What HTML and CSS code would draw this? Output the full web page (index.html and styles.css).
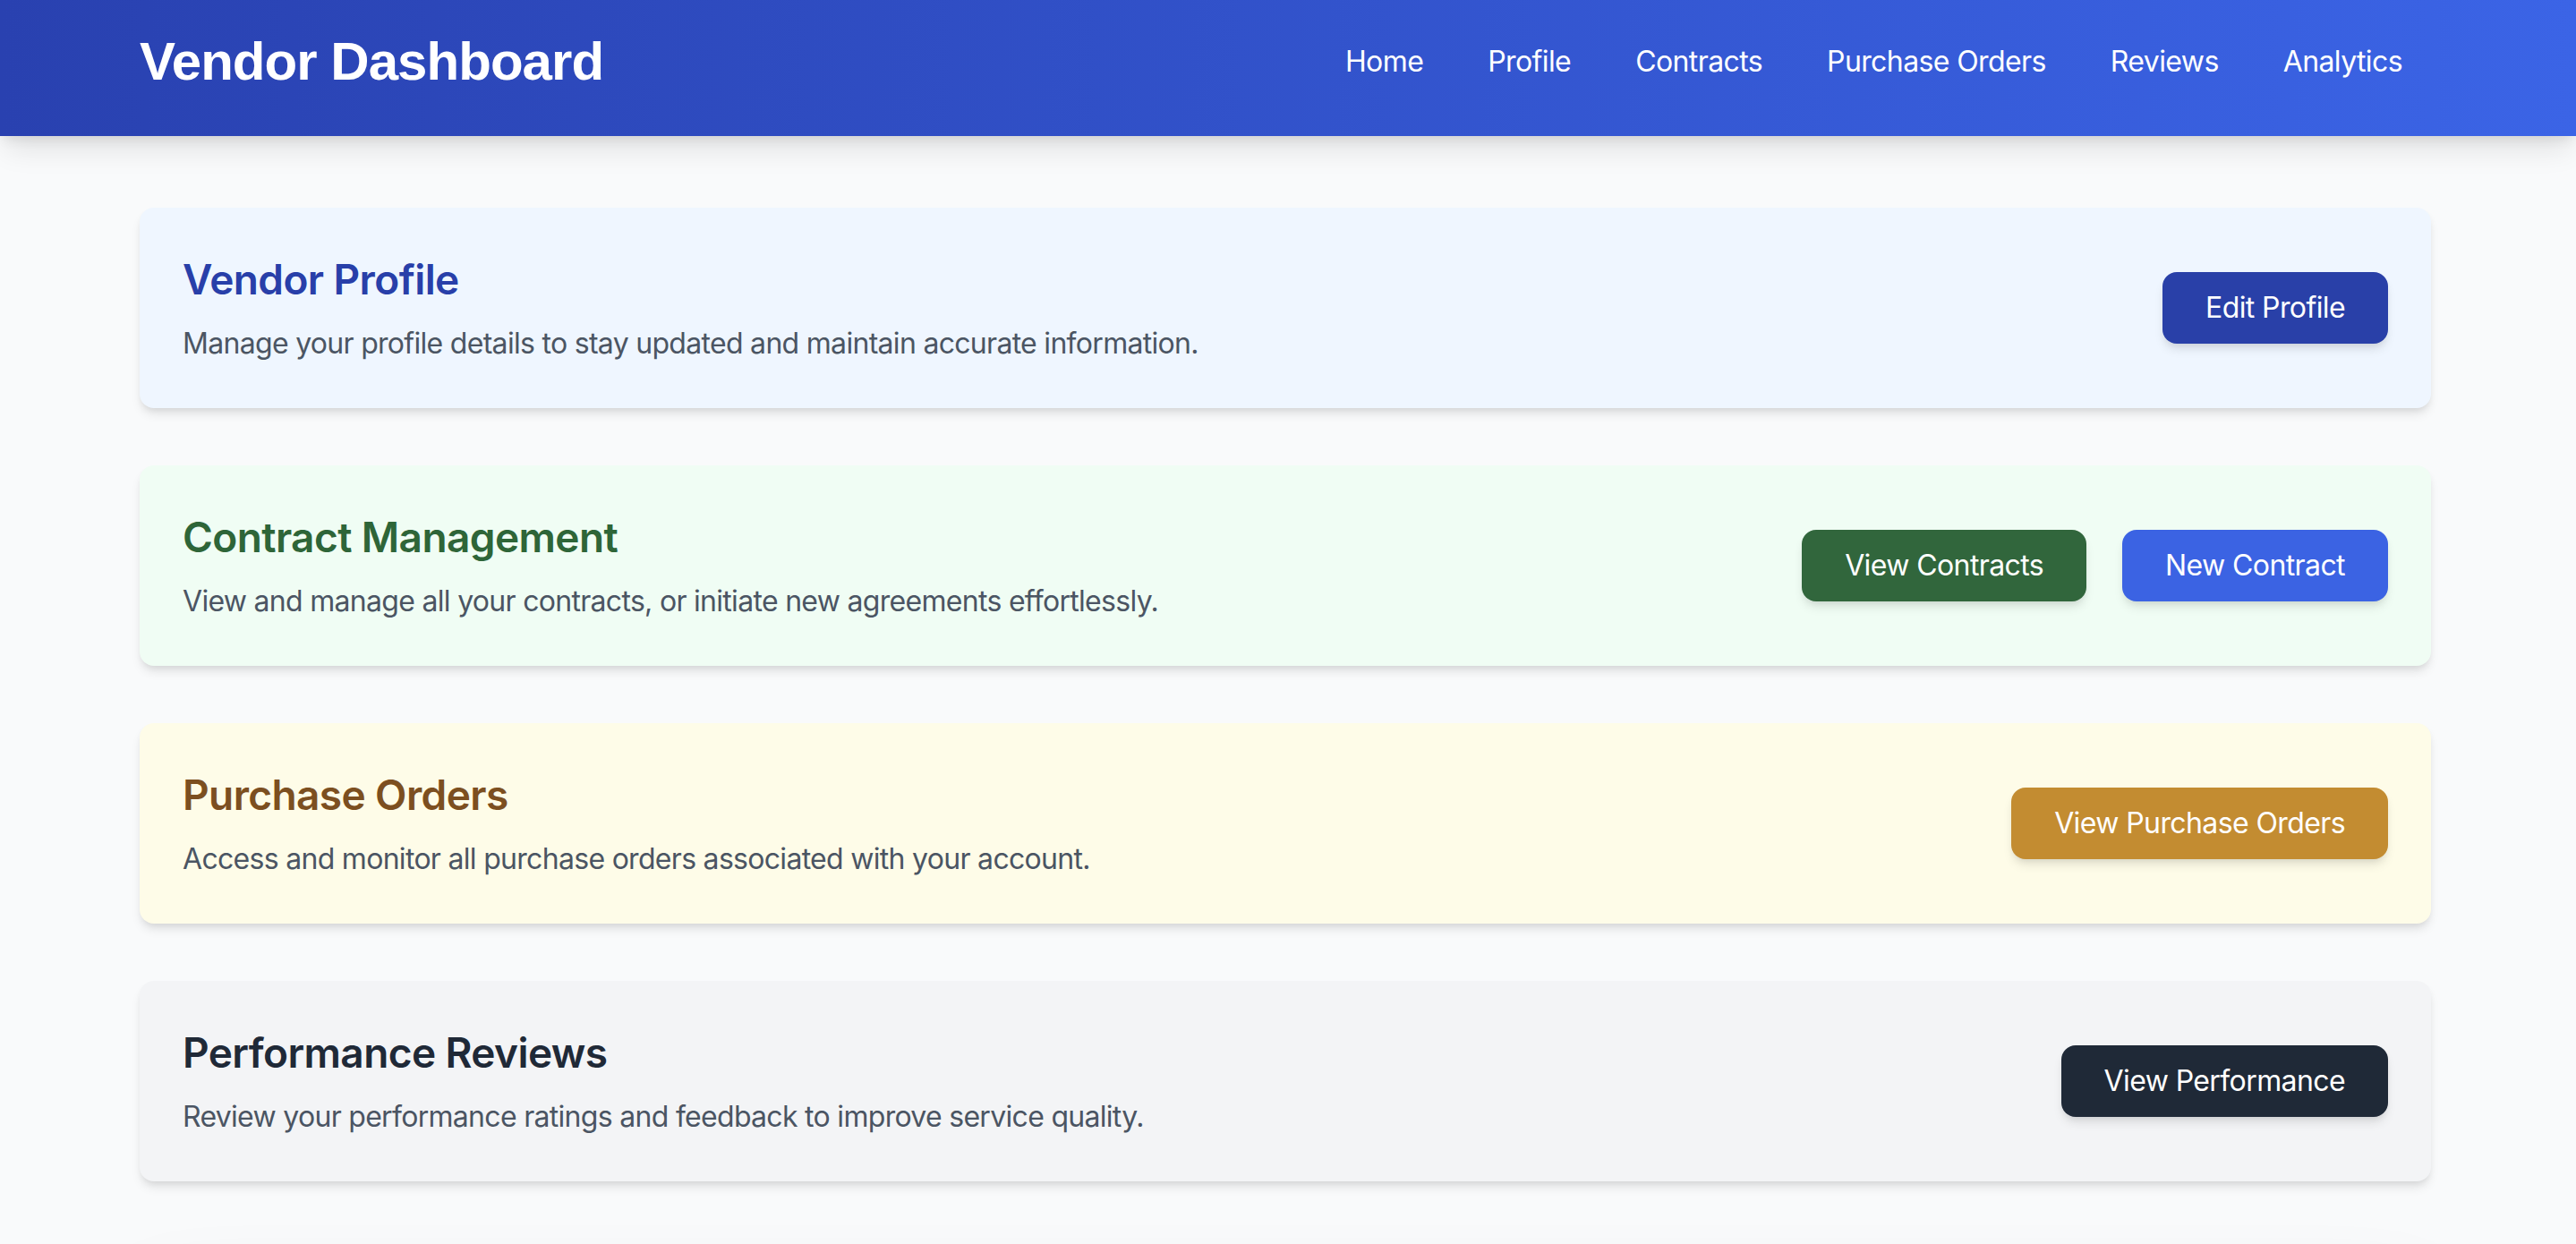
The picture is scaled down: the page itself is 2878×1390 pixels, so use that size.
FILE: index.html
```html
<!DOCTYPE html>
<html lang="en">
<head>
<meta charset="utf-8">
<title>Vendor Dashboard</title>
<link rel="stylesheet" href="styles.css">
</head>
<body>
<header class="topbar">
  <div class="container topbar-inner">
    <h1 class="brand">Vendor Dashboard</h1>
    <nav class="nav">
      <a href="#">Home</a>
      <a href="#">Profile</a>
      <a href="#">Contracts</a>
      <a href="#">Purchase Orders</a>
      <a href="#">Reviews</a>
      <a href="#">Analytics</a>
    </nav>
  </div>
</header>
<main class="container main">
  <section class="card card-blue">
    <div class="card-text">
      <h2 class="card-title">Vendor Profile</h2>
      <p class="card-desc">Manage your profile details to stay updated and maintain accurate information.</p>
    </div>
    <div class="card-actions">
      <button class="btn btn-navy">Edit Profile</button>
    </div>
  </section>
  <section class="card card-green">
    <div class="card-text">
      <h2 class="card-title">Contract Management</h2>
      <p class="card-desc">View and manage all your contracts, or initiate new agreements effortlessly.</p>
    </div>
    <div class="card-actions">
      <button class="btn btn-green">View Contracts</button>
      <button class="btn btn-blue">New Contract</button>
    </div>
  </section>
  <section class="card card-yellow">
    <div class="card-text">
      <h2 class="card-title">Purchase Orders</h2>
      <p class="card-desc">Access and monitor all purchase orders associated with your account.</p>
    </div>
    <div class="card-actions">
      <button class="btn btn-gold">View Purchase Orders</button>
    </div>
  </section>
  <section class="card card-gray">
    <div class="card-text">
      <h2 class="card-title">Performance Reviews</h2>
      <p class="card-desc">Review your performance ratings and feedback to improve service quality.</p>
    </div>
    <div class="card-actions">
      <button class="btn btn-dark">View Performance</button>
    </div>
  </section>
</main>
<footer class="container footer"></footer>
</body>
</html>
```
FILE: styles.css
```css
* { box-sizing: border-box; }
html, body { margin: 0; padding: 0; }
body {
  background: #f9fafb;
  font-family: Inter, "Noto Sans", "Liberation Sans", sans-serif;
  color: #1f2937;
  padding-right: 6px;
}
.container {
  max-width: 2560px;
  margin: 0 auto;
}
.topbar {
  background: linear-gradient(90deg, #2941b0 0%, #3b64e6 100%);
  box-shadow: 0 20px 30px -6px rgba(0,0,0,0.10), 0 8px 12px -4px rgba(0,0,0,0.08);
  padding: 33px 6px 47px 0;
  margin-right: -6px;
  position: relative;
  z-index: 1;
}
.topbar-inner {
  display: flex;
  align-items: center;
  justify-content: space-between;
}
.brand {
  margin: 0;
  color: #fff;
  font-family: "Liberation Sans", Arial, sans-serif;
  font-weight: 700;
  font-size: 60px;
  line-height: 72px;
  letter-spacing: -0.016em;
}
.nav {
  display: flex;
  gap: 72px;
  margin-right: 32px;
}
.nav a {
  color: #fff;
  text-decoration: none;
  font-size: 32px;
  line-height: 48px;
  letter-spacing: -0.6px;
}
.main {
  padding: 80px 0;
  display: flex;
  flex-direction: column;
  gap: 64px;
}
.card {
  display: flex;
  align-items: center;
  justify-content: space-between;
  padding: 48px;
  border-radius: 16px;
  box-shadow: 0 8px 12px -2px rgba(0,0,0,0.10), 0 4px 8px -4px rgba(0,0,0,0.10);
}
.card-title {
  margin: 0 0 16px;
  font-size: 46px;
  line-height: 64px;
  font-weight: 600;
  letter-spacing: -0.6px;
}
.card-desc {
  margin: 0;
  font-size: 32px;
  line-height: 48px;
  color: #4b5563;
  letter-spacing: -0.7px;
}
.card-actions {
  display: flex;
  gap: 40px;
}
.btn {
  font-family: inherit;
  font-size: 32px;
  line-height: 48px;
  color: #fff;
  border: none;
  border-radius: 16px;
  padding: 16px 48px;
  letter-spacing: -0.6px;
  box-shadow: 0 8px 12px -2px rgba(0,0,0,0.10), 0 4px 8px -4px rgba(0,0,0,0.10);
  cursor: pointer;
}
.card-blue { background: #eff6ff; }
.card-blue .card-title { color: #283fa9; }
.card-green { background: #f0fdf4; }
.card-green .card-title { color: #2e6538; }
.card-yellow { background: #fefce8; }
.card-yellow .card-title { color: #7c4f20; }
.card-gray { background: #f3f4f6; }
.card-gray .card-title { color: #1f2937; }
.btn-navy { background: #2940a8; }
.btn-green { background: #31663c; }
.btn-blue { background: #3b63e3; }
.btn-gold { background: #c38c31; }
.btn-dark { background: #1f2937; }
.footer {
  background: #f9fafb;
  border-radius: 16px;
  height: 120px;
  box-shadow: 0 50px 100px -24px rgba(0,0,0,0.25);
}
```
